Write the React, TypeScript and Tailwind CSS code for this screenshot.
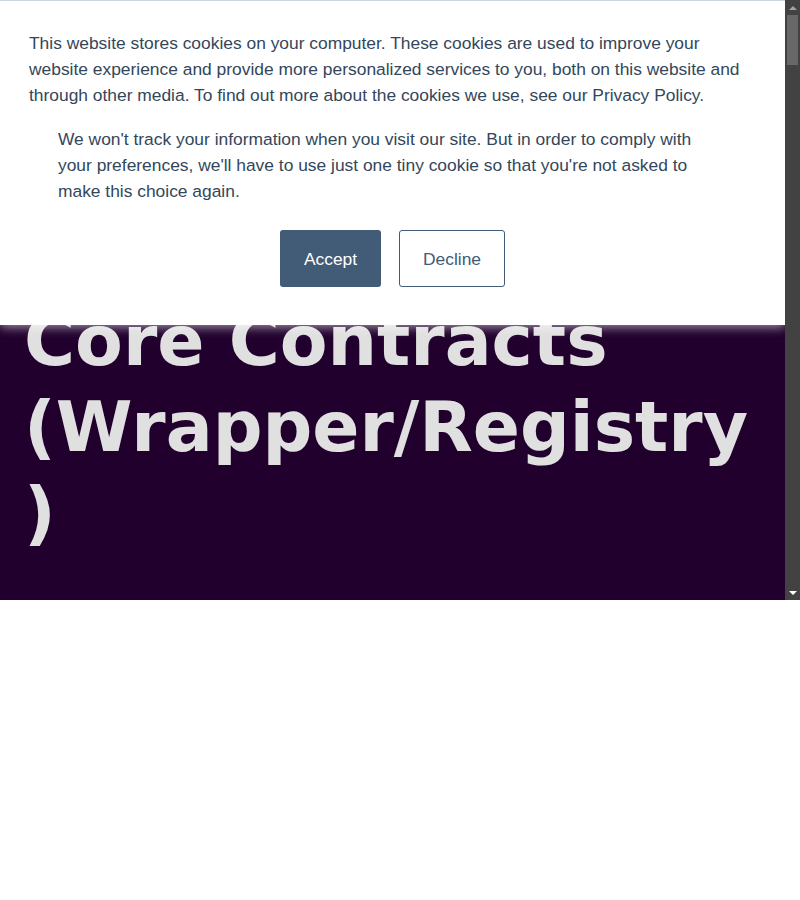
const BANNER_TEXT =
  "This website stores cookies on your computer. These cookies are used to improve your website experience and provide more personalized services to you, both on this website and through other media. To find out more about the cookies we use, see our Privacy Policy.";

const DECLINE_TEXT =
  "We won't track your information when you visit our site. But in order to comply with your preferences, we'll have to use just one tiny cookie so that you're not asked to make this choice again.";

function CookieBanner() {
  return (
    <div className="absolute left-0 right-0 top-0 z-10 border-t border-[#cbd6e2] bg-white px-[29px] pb-[38px] pt-[29px] font-['Liberation_Sans',Arial,sans-serif] text-[17.4px] leading-[26px] text-[#33475b] shadow-[0_2px_10px_rgba(255,255,255,0.6)]">
      <p>{BANNER_TEXT}</p>
      <p className="mt-[18px] px-[29px]">{DECLINE_TEXT}</p>
      <div className="mt-[26px] flex justify-center gap-[18px]">
        <button className="h-[57px] w-[101px] rounded-[3px] bg-[#425b76] text-[17.4px] text-white">
          Accept
        </button>
        <button className="h-[57px] w-[106px] rounded-[3px] border border-[#425b76] bg-white text-[17.4px] text-[#425b76]">
          Decline
        </button>
      </div>
    </div>
  );
}

function Scrollbar() {
  return (
    <div className="flex w-[15px] shrink-0 flex-col bg-[#424242]">
      <div className="flex h-[15px] items-center justify-center">
        <span className="h-0 w-0 border-x-[4px] border-b-[4px] border-x-transparent border-b-[#a3a3a3]" />
      </div>
      <div className="flex-1 px-[2px]">
        <div className="h-[50px] bg-[#686868]" />
      </div>
      <div className="flex h-[15px] items-center justify-center">
        <span className="h-0 w-0 border-x-[4px] border-t-[4px] border-x-transparent border-t-white" />
      </div>
    </div>
  );
}

export default function App() {
  return (
    <div className="flex h-[600px] w-[800px]">
      <div className="relative flex-1 overflow-hidden bg-[#22002e]">
        <CookieBanner />
        <div className="px-6 pb-[42px] pt-[298px]">
          <h1 className="font-['DejaVu_Sans',sans-serif] text-[69.6px] font-bold leading-[86px] text-[#e0e0e0] [overflow-wrap:anywhere]">
            Core Contracts (Wrapper/Registry)
          </h1>
        </div>
      </div>
      <Scrollbar />
    </div>
  );
}
